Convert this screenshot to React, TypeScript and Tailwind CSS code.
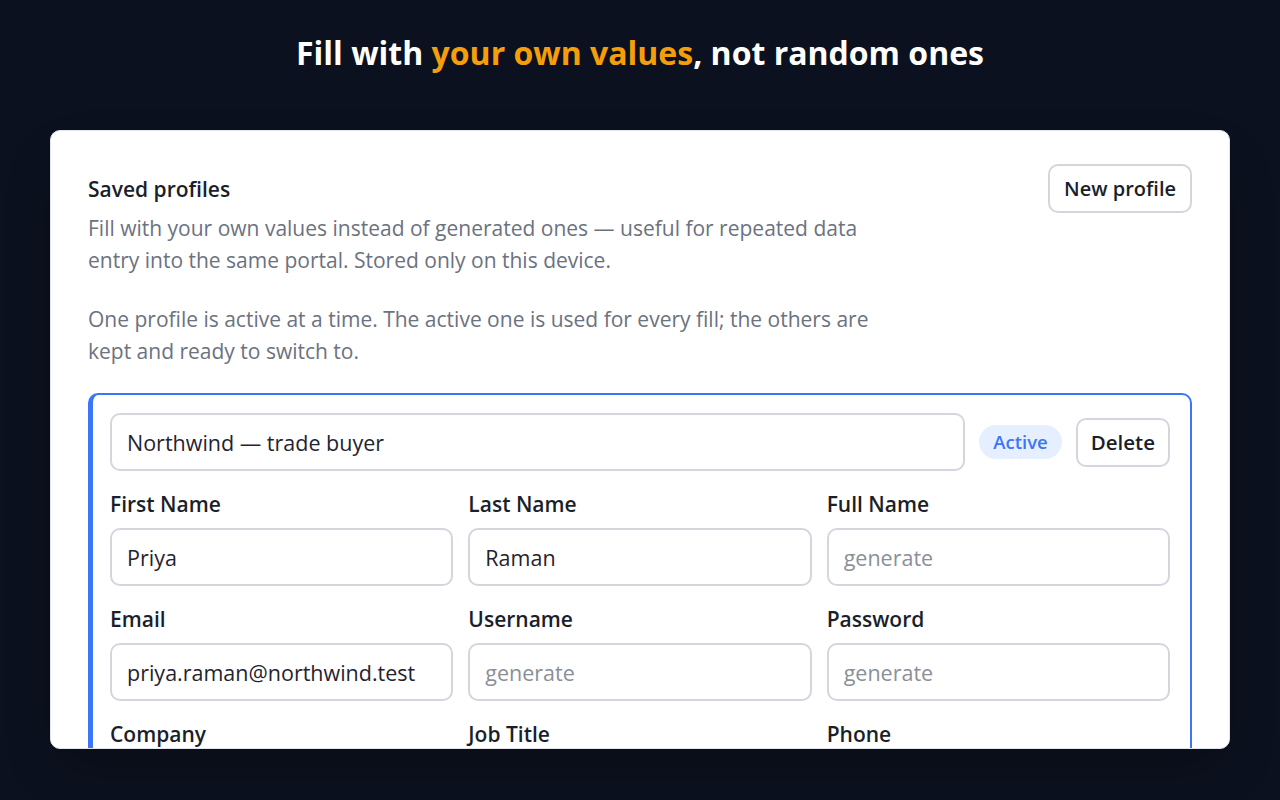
import React from 'react';

type Field = { label: string; value?: string };

const rows: Field[][] = [
    [{ label: 'First Name', value: 'Priya' }, { label: 'Last Name', value: 'Raman' }, { label: 'Full Name' }],
    [{ label: 'Email', value: 'priya.raman@northwind.test' }, { label: 'Username' }, { label: 'Password' }],
    [{ label: 'Company' }, { label: 'Job Title' }, { label: 'Phone' }],
];

function FieldBox({ label, value }: Field) {
    return (
        <div className="flex flex-col">
            <label className="text-[21px] font-semibold text-[#1a1f2b] leading-7 mb-[10px]">{label}</label>
            <input
                readOnly
                value={value ?? ''}
                placeholder="generate"
                className="h-[58px] rounded-[10px] border-2 border-[#d3d6dd] bg-white px-[15px] text-[21.5px] text-[#1f2430] placeholder:text-[#8a8f99] outline-none"
            />
        </div>
    );
}

export default function App() {
    return (
        <div className="h-[800px] overflow-hidden bg-[#0b111e] pt-[33px]" style={{ fontFamily: '"Open Sans", "Noto Sans", sans-serif' }}>
            <h1 className="text-center text-[32px] font-bold leading-10 text-white">
                Fill with <span className="text-[#f59e0b]">your own values</span>, not random ones
            </h1>

            <div className="mx-[50px] mt-[57px] h-[619px] overflow-hidden rounded-[10px] border border-[#e3e5ea] bg-white shadow-2xl">
                <div className="px-[37px] pt-[33px]">
                    <div className="flex items-start justify-between">
                        <div className="max-w-[790px]">
                            <h2 className="pt-[11px] text-[21px] font-semibold leading-7 text-[#1a1f2b]">Saved profiles</h2>
                            <p className="mt-[9px] text-[21px] leading-8 text-[#6b7280]">
                                Fill with your own values instead of generated ones — useful for repeated data entry into the same portal. Stored only on this device.
                            </p>
                            <p className="mt-[27px] text-[21px] leading-8 text-[#6b7280]">
                                One profile is active at a time. The active one is used for every fill; the others are kept and ready to switch to.
                            </p>
                        </div>
                        <button className="h-[49px] rounded-[10px] border-2 border-[#d3d6dd] bg-white px-[14px] text-[20px] font-semibold text-[#1a1f2b]">
                            New profile
                        </button>
                    </div>

                    <div className="mt-[26px] rounded-[10px] border-2 border-l-[5px] border-[#3b76f6] pl-[17px] pr-5 pt-[18px] pb-6">
                        <div className="flex items-center gap-[14px]">
                            <input
                                readOnly
                                value="Northwind — trade buyer"
                                className="h-[58px] flex-1 rounded-[10px] border-2 border-[#d3d6dd] bg-white px-[15px] text-[21.5px] text-[#1f2430] outline-none"
                            />
                            <span className="rounded-full bg-[#e6efff] px-[14px] py-[3px] text-[18.5px] font-semibold text-[#3b76f6]">Active</span>
                            <button className="h-[49px] rounded-[10px] border-2 border-[#d3d6dd] bg-white px-[13px] text-[20.5px] font-semibold text-[#1a1f2b]">
                                Delete
                            </button>
                        </div>

                        <div className="mt-[19px] flex flex-col gap-[19px]">
                            {rows.map((row, i) => (
                                <div key={i} className="grid grid-cols-3 gap-[15px]">
                                    {row.map((f) => (
                                        <FieldBox key={f.label} {...f} />
                                    ))}
                                </div>
                            ))}
                        </div>
                    </div>
                </div>
            </div>
        </div>
    );
}
